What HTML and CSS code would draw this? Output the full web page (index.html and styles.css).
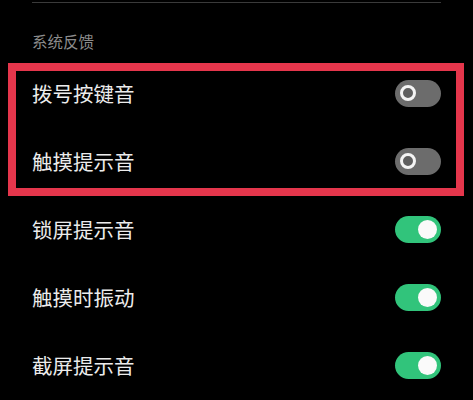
FILE: index.html
```html
<!DOCTYPE html>
<html lang="zh-CN">
<head>
<meta charset="utf-8">
<link rel="stylesheet" href="styles.css">
</head>
<body>
<div class="screen">
  <div class="divider"></div>
  <div class="section-title">系统反馈</div>
  <div class="highlight-group">
    <div class="row"><span class="label">拨号按键音</span><span class="switch off"><span class="knob"></span></span></div>
    <div class="row"><span class="label">触摸提示音</span><span class="switch off"><span class="knob"></span></span></div>
    <div class="highlight"></div>
  </div>
  <div class="row"><span class="label">锁屏提示音</span><span class="switch on"><span class="knob"></span></span></div>
  <div class="row"><span class="label">触摸时振动</span><span class="switch on"><span class="knob"></span></span></div>
  <div class="row"><span class="label">截屏提示音</span><span class="switch on"><span class="knob"></span></span></div>
</div>
</body>
</html>
```
FILE: styles.css
```css
html, body {
  margin: 0;
  padding: 0;
  background: #000;
}
.screen {
  width: 473px;
  height: 400px;
  overflow: hidden;
  background: #000;
  font-family: "Noto Sans CJK SC", "Noto Sans", sans-serif;
}
.divider {
  height: 1px;
  margin: 2px 32px 0 32px;
  background: #3a3a3a;
}
.section-title {
  margin: 28px 0 0 32px;
  height: 28px;
  line-height: 20px;
  font-size: 15.5px;
  color: #8c8c8c;
}
.highlight-group {
  position: relative;
}
.highlight {
  position: absolute;
  top: 4px;
  bottom: -1px;
  left: 8px;
  right: 9px;
  border: 8px solid #e5364c;
  pointer-events: none;
}
.row {
  height: 68px;
  display: flex;
  align-items: center;
  justify-content: space-between;
  padding: 0 32px;
}
.label {
  font-size: 20.5px;
  color: #ececec;
  letter-spacing: 0;
}
.switch {
  width: 46px;
  height: 27px;
  border-radius: 14px;
  display: flex;
  align-items: center;
  box-sizing: border-box;
}
.switch.off {
  background: #6c6c6c;
  padding-left: 5px;
}
.switch.off .knob {
  width: 16px;
  height: 16px;
  border-radius: 50%;
  box-sizing: border-box;
  border: 3px solid #f4f4f4;
  background: #5f5f5f;
}
.switch.on {
  background: #31c47b;
  justify-content: flex-end;
  padding-right: 4px;
}
.switch.on .knob {
  width: 19px;
  height: 19px;
  border-radius: 50%;
  background: #fafafa;
}
```
